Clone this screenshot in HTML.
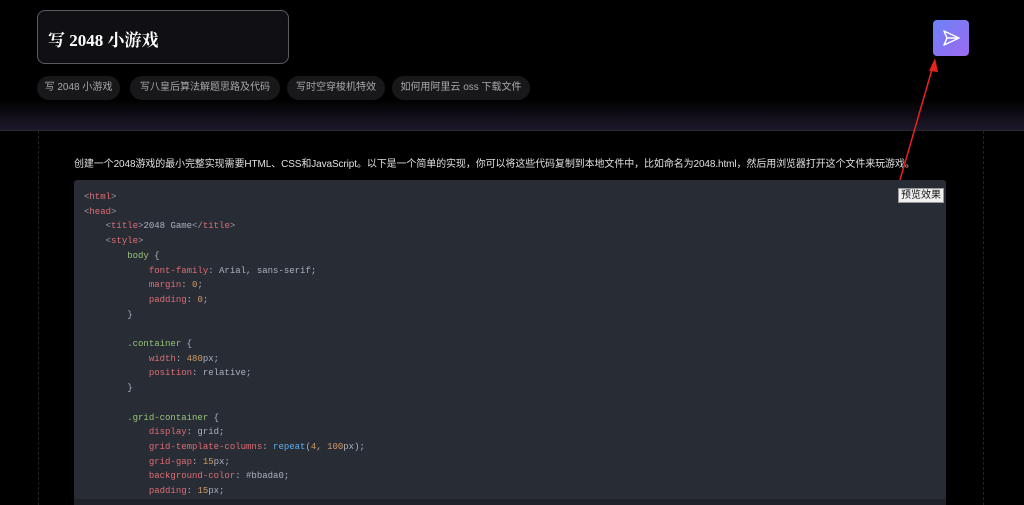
<!DOCTYPE html>
<html><head><meta charset="utf-8"><style>
*{margin:0;padding:0;box-sizing:border-box}
html,body{width:1024px;height:505px;overflow:hidden}
body{background:#000;position:relative;font-family:"Liberation Sans","Noto Sans CJK SC",sans-serif}
.band{position:absolute;left:0;top:100px;width:1024px;height:31px;background:linear-gradient(#000,#15121f 70%,#1c1828);border-bottom:1px solid #2a2636}
.title{position:absolute;left:37px;top:10px;width:252px;height:54px;border:1px solid #5a5a60;border-radius:8px;background:#0f0f14;color:#fff;font:bold 17px "Liberation Serif","Noto Serif CJK SC",serif;padding:15px 0 0 10px}
.chip{position:absolute;top:76px;height:24px;border-radius:12px;background:#18181b;color:#a8a8a8;font-size:10px;line-height:24px;text-align:center}
.send{position:absolute;left:933px;top:20px;width:36px;height:36px;border-radius:4px;background:linear-gradient(135deg,#6b82f7,#9d6af0)}
.vl{position:absolute;top:131px;bottom:0;border-left:1px dashed #222}
.desc{position:absolute;left:74px;top:155px;font-size:10px;color:#e0e0e0;white-space:nowrap;letter-spacing:-0.1px}
.code{position:absolute;left:74px;top:180px;width:872px;height:325px;background:#282c34;border-radius:3px;font:9px/14.7px "Liberation Mono",monospace;color:#abb2bf;padding:10px 10px;white-space:pre;overflow:hidden}
.t{color:#e06c75}.g{color:#98c379}.o{color:#d19a66}.b{color:#61afef}.p{color:#9aa0a8}
.pv{position:absolute;left:898px;top:188px;background:#f0f0f0;color:#111;font-size:10px;padding:0 2px;border:1px solid #999;line-height:13px}
</style></head><body>
<div class="band"></div>
<div class="vl" style="left:38px"></div>
<div class="vl" style="left:983px"></div>
<div class="title">写 2048 小游戏</div>
<div class="chip" style="left:37px;width:83px">写 2048 小游戏</div>
<div class="chip" style="left:130px;width:150px">写八皇后算法解题思路及代码</div>
<div class="chip" style="left:287px;width:98px">写时空穿梭机特效</div>
<div class="chip" style="left:392px;width:138px">如何用阿里云 oss 下载文件</div>
<div class="send"><svg width="36" height="36" viewBox="0 0 36 36"><path d="M11 11 L26 18 L11 25 L14 18 Z M14 18 H26" fill="none" stroke="#fff" stroke-width="1.5" stroke-linejoin="round"/></svg></div>
<div class="desc">创建一个2048游戏的最小完整实现需要HTML、CSS和JavaScript。以下是一个简单的实现，你可以将这些代码复制到本地文件中，比如命名为2048.html，然后用浏览器打开这个文件来玩游戏。</div>
<div class="code"><span class="p">&lt;</span><span class="t">html</span><span class="p">&gt;</span>
<span class="p">&lt;</span><span class="t">head</span><span class="p">&gt;</span>
    <span class="p">&lt;</span><span class="t">title</span><span class="p">&gt;</span>2048 Game<span class="p">&lt;/</span><span class="t">title</span><span class="p">&gt;</span>
    <span class="p">&lt;</span><span class="t">style</span><span class="p">&gt;</span>
        <span class="g">body</span> {
            <span class="t">font-family</span>: Arial, sans-serif;
            <span class="t">margin</span>: <span class="o">0</span>;
            <span class="t">padding</span>: <span class="o">0</span>;
        }

        <span class="g">.container</span> {
            <span class="t">width</span>: <span class="o">480</span>px;
            <span class="t">position</span>: relative;
        }

        <span class="g">.grid-container</span> {
            <span class="t">display</span>: grid;
            <span class="t">grid-template-columns</span>: <span class="b">repeat</span>(<span class="o">4</span>, <span class="o">100</span>px);
            <span class="t">grid-gap</span>: <span class="o">15</span>px;
            <span class="t">background-color</span>: #bbada0;
            <span class="t">padding</span>: <span class="o">15</span>px;
            <span class="t">border-radius</span>: <span class="o">10</span>px;</div>
<div style="position:absolute;left:74px;top:499px;width:872px;height:6px;background:#1f2228"></div>
<div class="pv">预览效果</div>
<svg style="position:absolute;left:0;top:0" width="1024" height="505"><line x1="900" y1="180" x2="933" y2="66" stroke="#e8231f" stroke-width="1.5"/><path d="M935 58 L929 71 L938 72 Z" fill="#e8231f"/></svg>
</body></html>
